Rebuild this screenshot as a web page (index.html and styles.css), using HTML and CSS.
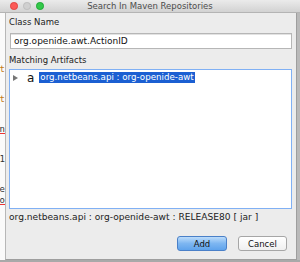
FILE: index.html
```html
<!DOCTYPE html>
<html lang="en">
<head>
  <meta charset="UTF-8" />
  <title>Search In Maven Repositories</title>
  <link rel="stylesheet" href="styles.css">
</head>
<body>
  <div class="titlebar">
    <div class="lights">
      <span class="light red"></span>
      <span class="light gray"></span>
      <span class="light green"></span>
    </div>
    <div class="title">Search In Maven Repositories</div>
  </div>

  <div class="main">
    <div class="gutter">
      <div class="gline code-kw">t</div>
      <div class="gline code-kw">t</div>
      <div class="gline code-err">n</div>
      <div class="gline">1</div>
      <div class="gline close">e</div>
      <div class="gline code-err">o</div>
    </div>

    <div class="dialog">
      <div class="label">Class Name</div>
      <div class="field">org.openide.awt.ActionID</div>

      <div class="label">Matching Artifacts</div>
      <div class="list">
        <div class="row">
          <span class="arrow"></span>
          <span class="glyph">a</span>
          <span class="item selected">org.netbeans.api : org-openide-awt</span>
        </div>
      </div>

      <div class="status">org.netbeans.api : org-openide-awt : RELEASE80 [ jar ]</div>

      <div class="buttons">
        <button class="btn primary">Add</button>
        <button class="btn">Cancel</button>
      </div>
    </div>

    <div class="edge"></div>
  </div>
</body>
</html>
```

FILE: styles.css
```css
body {
  margin: 0;
  width: 300px;
  height: 262px;
  overflow: hidden;
  background: #a9a9a9;
  font-family: "DejaVu Sans", sans-serif;
  font-size: 8.5px;
  color: #222;
}

.titlebar {
  position: relative;
  height: 13px;
  background: linear-gradient(#ebebeb, #d2d2d2);
  border-bottom: 1px solid #b4b4b4;
  box-sizing: border-box;
  display: flex;
  align-items: center;
  justify-content: center;
}

.lights {
  position: absolute;
  left: 10px;
  top: 2px;
  display: flex;
  gap: 5.5px;
}

.light {
  width: 7.5px;
  height: 7.5px;
  border-radius: 50%;
  box-sizing: border-box;
}

.light.red { background: #fc5a56; border: 0.5px solid #e0443e; }
.light.gray { background: #d0d0d0; border: 0.5px solid #bdbdbd; }
.light.green { background: #34c84a; border: 0.5px solid #1da934; }

.title {
  color: #4d4d4d;
}

.main {
  display: flex;
  height: 247px;
}

.gutter {
  width: 5px;
  flex-shrink: 0;
  background: #fafafa;
  overflow: hidden;
  direction: rtl;
  font-family: "DejaVu Sans Mono", monospace;
  font-size: 9px;
  padding-top: 51px;
}

.gline {
  height: 11px;
  line-height: 11px;
  margin-bottom: 19px;
  color: #333;
}

.gline.close {
  margin-bottom: 0;
}

.code-kw { color: #c57a16; }
.code-err { text-decoration: underline; text-decoration-color: #e33; }

.dialog {
  width: 292px;
  flex-shrink: 0;
  box-sizing: border-box;
  background: #ececec;
  border-left: 1px solid #b7b7b7;
  border-right: 1px solid #9e9e9e;
  border-bottom: 1px solid #9e9e9e;
  padding: 2px 4px 0 3px;
  display: flex;
  flex-direction: column;
}

.label {
  height: 15px;
  line-height: 15px;
}

.field {
  margin: 3px 0 0 1px;
  height: 16px;
  line-height: 15px;
  box-sizing: border-box;
  background: #fff;
  border: 1px solid #b6b6b6;
  box-shadow: inset 0 1px 0 #e2e2e2;
  padding-left: 3px;
  font-size: 9px;
  color: #111;
}

.field + .label {
  margin-top: 4px;
}

.list {
  margin-top: 1px;
  height: 140px;
  box-sizing: border-box;
  background: #fff;
  border: 1px solid #80b0f4;
  padding: 2px 0 0 3px;
}

.row {
  display: flex;
  align-items: center;
  height: 11px;
}

.arrow {
  width: 0;
  height: 0;
  border-top: 3px solid transparent;
  border-bottom: 3px solid transparent;
  border-left: 5px solid #777;
  margin-right: 9px;
}

.glyph {
  font-size: 12px;
  color: #111;
  margin-right: 5px;
}

.item.selected {
  background: #1b5fd2;
  color: #fff;
  font-size: 8.7px;
  height: 11px;
  line-height: 11px;
  padding: 0 1px;
}

.status {
  margin-top: 2px;
  height: 13px;
  line-height: 13px;
  font-size: 9.1px;
}

.buttons {
  margin-top: 12px;
  display: flex;
  justify-content: flex-end;
  gap: 11px;
  padding-right: 5px;
}

.btn {
  font-family: "DejaVu Sans", sans-serif;
  font-size: 8.5px;
  width: 49px;
  height: 15px;
  padding: 0;
  border-radius: 3px;
  border: 1px solid #a6a6a6;
  background: linear-gradient(#ffffff, #f0f0f0);
  color: #111;
}

.btn.primary {
  width: 50px;
  border-color: #4a80c8;
  background: linear-gradient(#bcdcfb, #7db6f1 50%, #5fa3ec);
}

.edge {
  flex: 1;
  background: #b9b9b9;
}
```
